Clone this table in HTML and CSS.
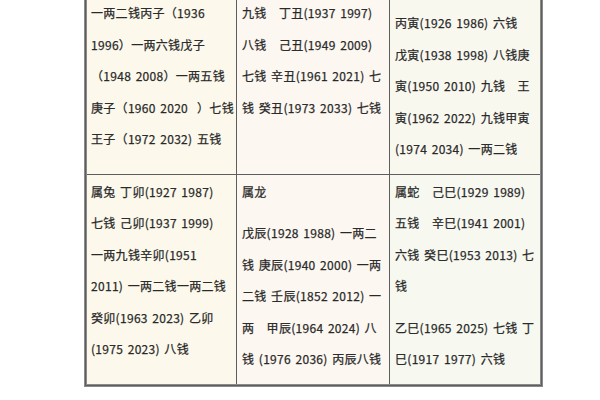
FILE: index.html
```html
<!DOCTYPE html>
<html lang="zh-CN">
<head>
<meta charset="utf-8">
<link rel="stylesheet" href="styles.css">
</head>
<body>
<div class="sheet">
  <div class="grid">
    <div class="cell c1 top">
      <p>一两二钱丙子（1936<br>1996）一两六钱戊子<br>（1948 2008）一两五钱<br>庚子（1960 2020&nbsp;&nbsp;）七钱<br>王子（1972 2032) 五钱</p>
    </div>
    <div class="cell c2 top">
      <p>九钱　丁丑(1937 1997)<br>八钱　己丑(1949 2009)<br>七钱 辛丑(1961 2021) 七<br>钱 癸丑(1973 2033) 七钱</p>
    </div>
    <div class="cell c3 top shifted">
      <p>丙寅(1926 1986) 六钱<br>戊寅(1938 1998) 八钱庚<br>寅(1950 2010) 九钱　王<br>寅(1962 2022) 九钱甲寅<br>(1974 2034) 一两二钱</p>
    </div>
    <div class="cell c1">
      <p>属兔 丁卯(1927 1987)<br>七钱 己卯(1937 1999)<br>一两九钱辛卯(1951<br>2011) 一两二钱一两二钱<br>癸卯(1963 2023) 乙卯<br>(1975 2023) 八钱</p>
    </div>
    <div class="cell c2">
      <p>属龙</p>
      <p>戊辰(1928 1988) 一两二<br>钱 庚辰(1940 2000) 一两<br>二钱 壬辰(1852 2012) 一<br>两　甲辰(1964 2024) 八<br>钱 (1976 2036) 丙辰八钱</p>
    </div>
    <div class="cell c3 alt">
      <p>属蛇　己巳(1929 1989)<br>五钱　辛巳(1941 2001)<br>六钱 癸巳(1953 2013) 七<br>钱</p>
      <p>乙巳(1965 2025) 七钱 丁<br>巳(1917 1977) 六钱</p>
    </div>
  </div>
</div>
</body>
</html>
```
FILE: styles.css
```css
html, body {
  margin: 0;
  padding: 0;
  background: #ffffff;
}
body {
  width: 600px;
  height: 400px;
  overflow: hidden;
  font-family: "Noto Sans CJK SC", "Noto Sans", sans-serif;
  font-size: 12px;
  font-weight: 400;
  color: #262626;
  letter-spacing: 0.3px;
  word-spacing: 1.5px;
  -webkit-text-stroke: 0.25px #333333;
}
.sheet {
  margin-top: -7px;
  margin-left: 84px;
  width: 459px;
}
.grid {
  display: grid;
  grid-template-columns: 149px 152px 150px;
  gap: 1px;
  background: #5e5e5e;
  border: 3px double #8a8a8a;
}
.cell {
  padding: 1px 2px 9px 5px;
  line-height: 31.5px;
  white-space: nowrap;
}
.cell p {
  margin: 0 0 10px 0;
}
.cell p:last-child {
  margin-bottom: 0;
}
.c1 { background: #fcf9ec; padding-left: 4px; }
.c2 { background: #fcf7f0; }
.c3 { background: #f9f8ef; }
.c3.alt { background: #f7f8ef; }
.shifted { padding-top: 11px; }
```
